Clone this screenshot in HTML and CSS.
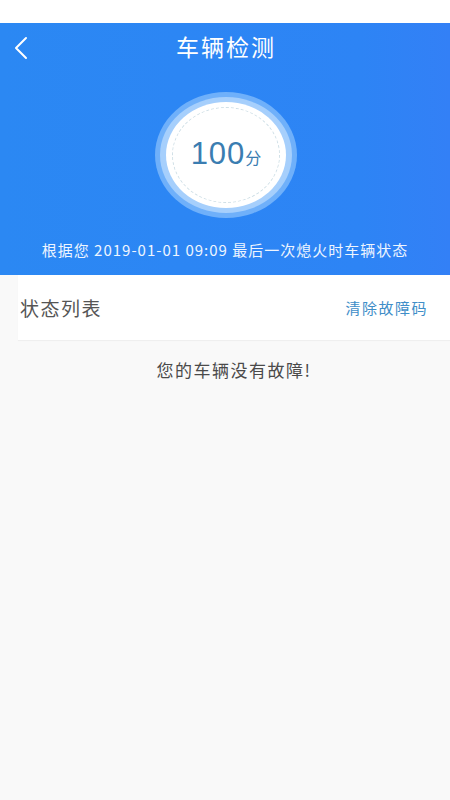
FILE: index.html
```html
<!DOCTYPE html>
<html>
<head>
	<meta charset="utf-8">
	<title>车辆检测</title>
	<link rel="stylesheet" href="styles.css">
</head>
<body>
	<div class="status-bar"></div>
	<div class="header">
		<div class="nav">
			<span class="back">
				<svg width="16" height="24" viewBox="0 0 16 24">
					<path d="M13 2 L3 12 L13 22" fill="none" stroke="#fff" stroke-width="2" stroke-linecap="round" stroke-linejoin="round"/>
				</svg>
			</span>
			<h1>车辆检测</h1>
		</div>
		<div class="score">
			<div class="ring-outer">
				<div class="ring-mid">
					<div class="ring-inner">
						<div class="ring-dash">
							<span class="num">100</span><span class="unit">分</span>
						</div>
					</div>
				</div>
			</div>
		</div>
		<p class="note">根据您 2019-01-01 09:09 最后一次熄火时车辆状态</p>
	</div>
	<div class="list">
		<div class="card">
			<span class="card-title">状态列表</span>
			<a class="clear">清除故障码</a>
		</div>
		<p class="empty">您的车辆没有故障!</p>
	</div>
</body>
</html>
```

FILE: styles.css
```css
body {
	margin: 0;
	background: #f9f9f9;
	font-family: "Noto Sans CJK SC", "Noto Sans", sans-serif;
	height: 800px;
}

.status-bar {
	height: 23px;
	background: #fff;
}

.header {
	height: 252px;
	background: linear-gradient(90deg, #2b88f3, #2d84f5 80%, #3380f6);
	color: #fff;
	display: flex;
	flex-direction: column;
}

.nav {
	position: relative;
	height: 46px;
	display: flex;
	align-items: center;
	justify-content: center;
}

.nav h1 {
	margin: 0 0 0 2px;
	font-size: 23px;
	font-weight: normal;
	letter-spacing: 2px;
}

.back {
	position: absolute;
	left: 13px;
	top: 13px;
}

.score {
	display: flex;
	justify-content: center;
	margin-top: 23px;
	margin-left: 2px;
}

.ring-outer {
	width: 142px;
	height: 126px;
	border-radius: 50%;
	background: #6fb0fa;
	display: flex;
	align-items: center;
	justify-content: center;
}

.ring-mid {
	width: 132px;
	height: 116px;
	border-radius: 50%;
	background: #a6cffc;
	display: flex;
	align-items: center;
	justify-content: center;
}

.ring-inner {
	width: 120px;
	height: 106px;
	border-radius: 50%;
	background: #fff;
	display: flex;
	align-items: center;
	justify-content: center;
}

.ring-dash {
	width: 108px;
	height: 96px;
	border-radius: 50%;
	border: 1px dashed #cfdfe6;
	display: flex;
	align-items: baseline;
	justify-content: center;
	padding-top: 30px;
	box-sizing: border-box;
}

.num {
	font-family: "Liberation Sans", Arial, sans-serif;
	font-size: 31px;
	letter-spacing: 1px;
	color: #3b7db1;
	line-height: 1;
}

.unit {
	font-size: 16px;
	color: #3b7db1;
}

.note {
	margin: 21px 0 0;
	text-align: center;
	font-size: 15px;
	letter-spacing: 1px;
	color: #eef5ff;
}

.list {
	margin-left: 18px;
}

.card {
	height: 65px;
	background: #fff;
	display: flex;
	align-items: center;
	justify-content: space-between;
	padding-right: 22px;
	box-shadow: 0 1px 1px #efefef;
}

.card-title {
	font-size: 19px;
	letter-spacing: 1.5px;
	color: #555;
	margin-left: 2px;
}

.clear {
	font-size: 15px;
	letter-spacing: 1.5px;
	color: #3f8ec8;
}

.empty {
	margin: 17px 0 0;
	text-align: center;
	font-size: 17px;
	letter-spacing: 1.5px;
	color: #4a4a4a;
}
```
